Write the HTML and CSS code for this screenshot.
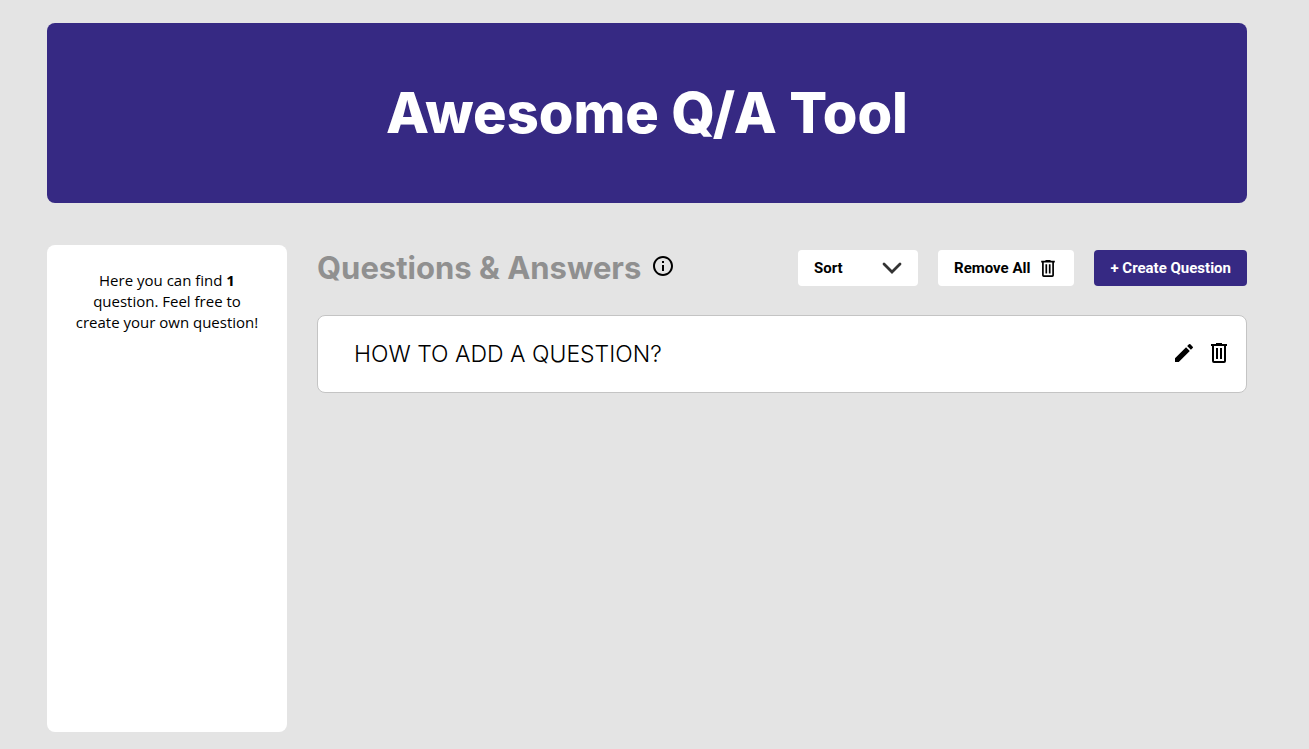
FILE: index.html
```html
<!DOCTYPE html>
<html lang="en">
<head>
<meta charset="utf-8">
<title>Awesome Q/A Tool</title>
<link rel="stylesheet" href="styles.css">
</head>
<body>
<svg class="sprite" aria-hidden="true">
  <symbol id="trash" viewBox="0 0 16 20">
    <path fill="currentColor" fill-rule="evenodd" d="M5 0h6v1h5v2h-1v15a2 2 0 0 1-2 2H3a2 2 0 0 1-2-2V3H0V1h5zM3 3v15h10V3zM5 5h2v11H5zM9 5h2v11H9z"/>
  </symbol>
</svg>
<div class="page">
  <header class="banner"><h1 class="banner-title">Awesome Q/A Tool</h1></header>
  <div class="content">
    <aside class="sidebar">
      <p class="summary">Here you can find <b>1</b> question. Feel free to create your own question!</p>
    </aside>
    <main class="main">
      <div class="toolbar">
        <h2 class="heading">Questions &amp; Answers</h2>
        <svg class="info" viewBox="0 0 24 24" role="img" aria-label="Information"><path fill="currentColor" d="M11 7h2v2h-2zm0 4h2v6h-2zm1-9C6.480 2 2 6.480 2 12s4.480 10 10 10 10-4.480 10-10S17.520 2 12 2zm0 18c-4.410 0-8-3.590-8-8s3.590-8 8-8 8 3.590 8 8-3.590 8-8 8z"/></svg>
        <div class="actions">
          <div class="sort">
            <select class="button sort-select" aria-label="Sort questions"><option>Sort</option></select>
            <svg class="chevron" viewBox="0 0 20 12" aria-hidden="true"><path d="M2 2l8 8 8-8" fill="none" stroke="#333" stroke-width="2.800" stroke-linecap="round"/></svg>
          </div>
          <button class="button remove" type="button">Remove All <svg class="icon-small" aria-hidden="true"><use href="#trash"/></svg></button>
          <button class="button primary" type="button">+ Create Question</button>
        </div>
      </div>
      <article class="question">
        <h3 class="question-title">HOW TO ADD A QUESTION?</h3>
        <button class="icon-button" type="button" aria-label="Edit question"><svg class="icon" viewBox="0 0 24 24"><path fill="currentColor" d="M3 17.250V21h3.750L17.810 9.940l-3.750-3.750zM20.710 7.040a1 1 0 0 0 0-1.410l-2.340-2.340a1 1 0 0 0-1.410 0l-1.830 1.830 3.750 3.750z"/></svg></button>
        <button class="icon-button" type="button" aria-label="Delete question"><svg class="icon trash"><use href="#trash"/></svg></button>
      </article>
    </main>
  </div>
</div>
</body>
</html>
```
FILE: styles.css
```css
* { box-sizing: border-box; }
body {
  margin: 0;
  padding: 23px 15px 17px 0;
  min-height: 100vh;
  display: flex;
  background: #e4e4e4;
  color: #000;
  font-family: "Open Sans", sans-serif;
}
h1, h2, h3, p { margin: 0; }
.sprite { position: absolute; width: 0; height: 0; }
.page {
  width: 100%;
  max-width: 1200px;
  margin: 0 auto;
  display: flex;
  flex-direction: column;
  gap: 42px;
}
.banner {
  padding: 56px 24px;
  border-radius: 8px;
  background: #362983;
  color: #fff;
  text-align: center;
}
.banner-title { font: 800 56px/68px Inter, sans-serif; }
.content { flex: 1; display: flex; gap: 30px; }
.sidebar {
  width: 240px;
  flex-shrink: 0;
  padding: 25px 24px;
  border-radius: 8px;
  background: #fff;
}
.summary { font-size: 15px; line-height: 21px; text-align: center; }
.main { flex: 1; min-width: 0; }
.toolbar { display: flex; align-items: center; padding-top: 2px; margin-bottom: 26px; }
.heading { color: #909090; font: 700 31px/42px Inter, sans-serif; }
.info { width: 24px; height: 24px; margin: 0 0 4px 10px; }
.actions { display: flex; gap: 20px; margin-left: auto; }
.button {
  height: 36px;
  padding: 0 16px;
  border: 0;
  border-radius: 4px;
  background: #fff;
  color: #000;
  font: 700 15px/20px Roboto, sans-serif;
  white-space: nowrap;
  cursor: pointer;
}
.sort { position: relative; }
.sort-select { width: 120px; appearance: none; }
.chevron { position: absolute; top: 12px; right: 16px; width: 20px; height: 12px; pointer-events: none; }
.remove { display: flex; align-items: center; gap: 11px; padding-right: 19px; }
.icon-small { width: 14px; height: 17px; }
.primary { background: #362983; color: #fff; }
.question {
  display: flex;
  align-items: center;
  gap: 15px;
  padding: 18px 19px 20px 36px;
  border: 1px solid #c4c4c4;
  border-radius: 8px;
  background: #fff;
}
.question-title { flex: 1; padding-top: 2px; font: 300 23px/36px Inter, sans-serif; }
.icon-button { display: flex; padding: 0; border: 0; background: none; color: #000; cursor: pointer; }
.icon { width: 24px; height: 24px; }
.trash { width: 16px; height: 20px; }
```
